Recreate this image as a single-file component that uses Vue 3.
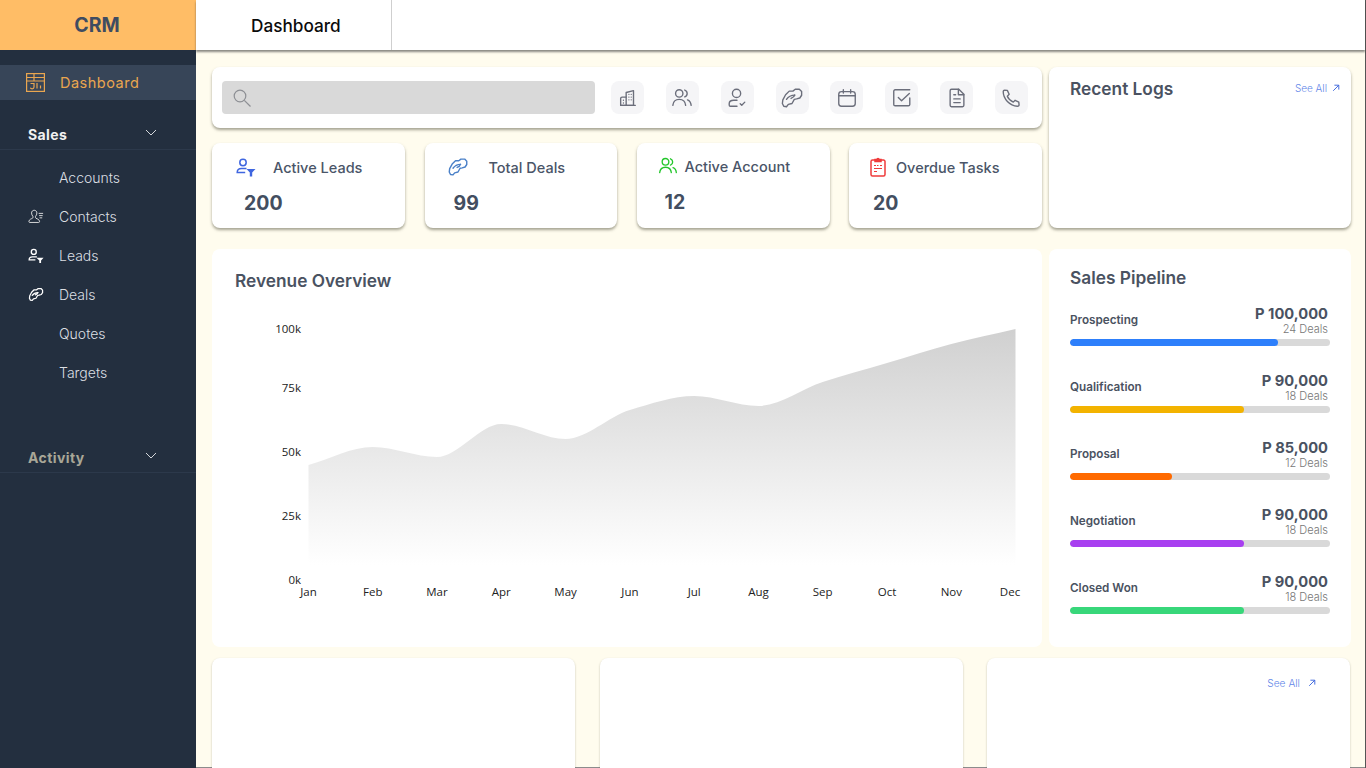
<script setup>
const navItems = [
  { label: 'Accounts' },
  { label: 'Contacts', icon: 'contacts' },
  { label: 'Leads', icon: 'leads' },
  { label: 'Deals', icon: 'deals' },
  { label: 'Quotes' },
  { label: 'Targets' }
]

const icons = {
  building: ['M10 20V6l8-2v16Z', 'M10 11H5.500a1.500 1.500 0 0 0-1.500 1.500V20h6', 'M13 8h.01M15.500 8h.01M13 11h.01M15.500 11h.01M13 14h.01M15.500 14h.01M7 14.500h.01M7 17.500h.01', 'M4 20H20'],
  people: ['M9 11a4 4 0 1 0 0-8 4 4 0 0 0 0 8Z', 'M2 20c.4-4 3.200-6.500 7-6.500s6.600 2.500 7 6.500', 'M15 3.300a4 4 0 0 1 0 7.500', 'M18 14c2.300.8 3.700 3 4 6'],
  usercheck: ['M11.500 11.500a4.500 4.500 0 1 0 0-9 4.500 4.500 0 0 0 0 9Z', 'M12 14.500H8.500c-2.800 0-5 1.500-5 3.500v1.500c0 .8.500 1.500 1.200 1.500H12', 'M15.500 18.200l1.700 1.600 3.300-3.300'],
  deals: ['M5 8.500L9 4.500H13L15.500 2.500H20L22.500 5V9L20.500 12 17 13 14.500 13.500 12 18 8 19 6 21.500 3 21 1.500 18 2 14Z', 'M6 13.500C8 10.500 11 8.800 15 8.800', 'M15 8.800C14.500 10.500 13.500 11.500 11 12.500'],
  calendar: ['M3 8a3 3 0 0 1 3-3h12a3 3 0 0 1 3 3v10a3 3 0 0 1-3 3H6a3 3 0 0 1-3-3Z', 'M3 9.500h18', 'M8 3v3.500M16 3v3.500'],
  task: ['M20.500 12v7a1.500 1.500 0 0 1-1.500 1.500H4.500A1.500 1.500 0 0 1 3 19V4.500A1.500 1.500 0 0 1 4.500 3H20.500', 'M8 11.500l3.500 3.500 8.500-8'],
  doc: ['M6 2.500h8l5.500 5.500v12a1.500 1.500 0 0 1-1.500 1.500H6A1.500 1.500 0 0 1 4.500 20V4A1.500 1.500 0 0 1 6 2.500Z', 'M13.500 2.500V8.500H19.500', 'M8.500 8.500h2M8.500 13h7M8.500 17h7'],
  phone: ['M5 3.500l3 .2 2 4.300-2 2c1 2.500 3.500 5 6.500 6.500l2-2 4 2 .3 3c.1 1-.8 1.500-1.800 1.500C10.500 20.500 3.500 13 3.500 5c0-1 .5-1.500 1.500-1.500Z']
}

const toolbar = ['building', 'people', 'usercheck', 'deals', 'calendar', 'task', 'doc', 'phone']

const stats = [
  { label: 'Active Leads', value: '200', variant: 'leads' },
  { label: 'Total Deals', value: '99', variant: 'deals' },
  { label: 'Active Account', value: '12', variant: 'account' },
  { label: 'Overdue Tasks', value: '20', variant: 'tasks' }
]

const pipeline = [
  { name: 'Prospecting', amount: 'P 100,000', deals: '24 Deals', pct: 80, color: '#2d7ffb' },
  { name: 'Qualification', amount: 'P 90,000', deals: '18 Deals', pct: 67, color: '#f3b300' },
  { name: 'Proposal', amount: 'P 85,000', deals: '12 Deals', pct: 39.2, color: '#ff6a00' },
  { name: 'Negotiation', amount: 'P 90,000', deals: '18 Deals', pct: 67, color: '#a83ff0' },
  { name: 'Closed Won', amount: 'P 90,000', deals: '18 Deals', pct: 67, color: '#38d77a' }
]

const chartPoints = [
  [308.5, 465], [372.8, 447], [437, 457], [501.3, 424], [565.6, 439], [629.9, 410],
  [694.2, 396], [758.5, 406], [822.7, 382], [887, 363], [951.3, 344], [1015.5, 329]
]
const chartBottom = 565

function monotonePath(pts) {
  const n = pts.length
  const dx = []
  const slope = []
  for (let i = 0; i < n - 1; i++) {
    dx[i] = pts[i + 1][0] - pts[i][0]
    slope[i] = (pts[i + 1][1] - pts[i][1]) / dx[i]
  }
  const t = [slope[0]]
  for (let i = 1; i < n - 1; i++) {
    t[i] = slope[i - 1] * slope[i] <= 0 ? 0 : (2 * slope[i - 1] * slope[i]) / (slope[i - 1] + slope[i])
  }
  t[n - 1] = slope[n - 2]
  let d = `M${pts[0][0]} ${pts[0][1]}`
  for (let i = 0; i < n - 1; i++) {
    const h = dx[i] / 3
    d += `C${pts[i][0] + h} ${pts[i][1] + t[i] * h} ${pts[i + 1][0] - h} ${pts[i + 1][1] - t[i + 1] * h} ${pts[i + 1][0]} ${pts[i + 1][1]}`
  }
  return d
}

const areaPath = `${monotonePath(chartPoints)}L1015.5 ${chartBottom}L308.5 ${chartBottom}Z`

const yLabels = [
  { t: '100k', y: 328 }, { t: '75k', y: 387 }, { t: '50k', y: 451 }, { t: '25k', y: 515 }, { t: '0k', y: 579 }
]
const xLabels = [
  { t: 'Jan', x: 308.5 }, { t: 'Feb', x: 372.8 }, { t: 'Mar', x: 437 }, { t: 'Apr', x: 501.3 }, { t: 'May', x: 565.6 }, { t: 'Jun', x: 629.9 },
  { t: 'Jul', x: 694.2 }, { t: 'Aug', x: 758.5 }, { t: 'Sep', x: 822.7 }, { t: 'Oct', x: 887 }, { t: 'Nov', x: 951.3 }, { t: 'Dec', x: 1010 }
]
</script>

<template>
  <div class="app">
    <aside class="sidebar">
      <div class="brand">CRM</div>
      <nav class="nav">
        <a class="active-item">
          <svg class="dash-icon" viewBox="0 0 19 19" fill="none" stroke="#e9a650" stroke-width="1.200">
            <rect x="0.600" y="0.600" width="17.800" height="17.800" />
            <path d="M0.600 4.500H18.400M0.600 8H18.400M8 0.600V8" />
            <path d="M4.500 10.500H8V14c0 1.200-.9 1.800-1.900 1.800-.9 0-1.500-.4-1.800-1" />
            <path d="M11 10V15.500M14.500 12.500V15.500" />
          </svg>
          <span>Dashboard</span>
        </a>

        <div class="section-head sales-head">
          <span>Sales</span>
          <svg class="chev" viewBox="0 0 12 7" fill="none" stroke="#d5d8dc" stroke-width="1"><path d="M1 1l5 5 5-5" /></svg>
        </div>

        <ul class="nav-list">
          <li v-for="item in navItems" :key="item.label" class="nav-item">
            <span class="nav-icon">
              <svg v-if="item.icon === 'contacts'" viewBox="0 0 18 16" fill="none" stroke="#e8e8e8" stroke-width="1"><path d="M7 1c-1.700 0-3 1.300-3 3 0 1.500.6 3 1.500 3.800.3.400.2 1.700-.5 2.200-1.500.8-3.500 1-4 3.500-.1.700.3 1.200 1 1.200h10c.7 0 1.100-.5 1-1.200-.5-2.500-2.500-2.700-4-3.500-.7-.5-.8-1.800-.5-2.200C9.400 7 10 5.500 10 4c0-1.700-1.300-3-3-3Z" /><path d="M12 4.500h5M12.500 7h4M13 9.500h3" /></svg>
              <svg v-else-if="item.icon === 'leads'" viewBox="0 0 18 16" fill="none" stroke="#fff" stroke-width="1.500"><circle cx="6.500" cy="4" r="2.800" /><path d="M10 9.500H5c-2.200 0-3.700 1.200-3.700 3.500h7" /><path d="M9.500 10.500h8L14.700 13.500V16.500H12.700V13.500Z" fill="#fff" stroke="none" /></svg>
              <svg v-else-if="item.icon === 'deals'" viewBox="0 0 24 24" fill="none" stroke="#fff" stroke-width="2" stroke-linejoin="round" stroke-linecap="round"><path v-for="d in icons.deals" :key="d" :d="d" /></svg>
            </span>
            <span>{{ item.label }}</span>
          </li>
        </ul>

        <div class="section-head activity-head">
          <span>Activity</span>
          <svg class="chev" viewBox="0 0 12 7" fill="none" stroke="#d5d8dc" stroke-width="1"><path d="M1 1l5 5 5-5" /></svg>
        </div>
      </nav>
    </aside>

    <main class="main">
      <header class="topbar">
        <div class="tab">Dashboard</div>
      </header>

      <div class="content">
        <div class="top-grid">
          <div class="left-top">
            <section class="toolbar card raised">
              <div class="search">
                <svg viewBox="0 0 18 18" fill="none" stroke="#8d8f94" stroke-width="1.200"><circle cx="7" cy="7" r="5.800" /><path d="M11.300 11.300L17.500 17.500" /></svg>
              </div>
              <div class="tool-icons">
                <button v-for="name in toolbar" :key="name" class="tool-btn" type="button">
                  <svg viewBox="0 0 24 24" fill="none" stroke="#6b6e7b" stroke-width="1.500" stroke-linecap="round" stroke-linejoin="round">
                    <path v-for="d in icons[name]" :key="d" :d="d" />
                  </svg>
                </button>
              </div>
            </section>

            <div class="stats">
              <section v-for="s in stats" :key="s.label" class="stat card raised" :class="`stat-${s.variant}`">
                <div class="stat-head">
                  <svg v-if="s.variant === 'leads'" class="stat-icon" viewBox="0 0 20 18" fill="none" stroke="#3f66e0" stroke-width="1.500"><circle cx="7" cy="4.500" r="3.200" /><path d="M10.500 10.500H5.500C3 10.500 1.200 12 1.200 14.500h8" /><path d="M10.500 11h9l-3.300 3.500V18.500h-2.400V14.500Z" fill="#3f66e0" stroke="none" /></svg>
                  <svg v-else-if="s.variant === 'deals'" class="stat-icon" viewBox="0 0 24 24" fill="none" stroke="#4a80c8" stroke-width="1.700" stroke-linejoin="round" stroke-linecap="round"><path v-for="d in icons.deals" :key="d" :d="d" /></svg>
                  <svg v-else-if="s.variant === 'account'" class="stat-icon" viewBox="0 0 24 24" fill="none" stroke="#22c62a" stroke-width="1.600" stroke-linecap="round"><path v-for="d in icons.people" :key="d" :d="d" /></svg>
                  <svg v-else class="stat-icon" viewBox="0 0 16 20" fill="none" stroke="#ef3b3b" stroke-width="1.500"><path d="M5 3H2.500C1.700 3 1 3.700 1 4.500v13c0 .8.700 1.500 1.500 1.500h11c.8 0 1.500-.7 1.500-1.500v-13C15 3.700 14.300 3 13.500 3H11" /><path d="M5 4.500V2.500h2C7 1 9 1 9 2.500h2v2Z" fill="#ef3b3b" /><path d="M4 8.500h2M7 8.500h1.500M10 8.500h2M4 11.500h8M4 14.500h3" stroke-width="1" /></svg>
                  <span class="stat-label">{{ s.label }}</span>
                </div>
                <div class="stat-value">{{ s.value }}</div>
              </section>
            </div>
          </div>

          <section class="logs card raised">
            <h2 class="title logs-title">Recent Logs</h2>
            <a class="see-all">
              <span>See All</span>
              <svg viewBox="0 0 10 10" fill="none" stroke="#3f67dd" stroke-width="1.200"><path d="M1.500 8.500L8.500 1.500M3 1.500H8.500V7" /></svg>
            </a>
          </section>

          <section class="revenue card">
            <h2 class="title revenue-title">Revenue Overview</h2>
            <svg class="chart" viewBox="212 310 830 300">
              <defs>
                <linearGradient id="areaFill" x1="0" y1="0" x2="0" y2="1">
                  <stop offset="0" stop-color="#d0d0d0" />
                  <stop offset="1" stop-color="#ffffff" />
                </linearGradient>
              </defs>
              <path :d="areaPath" fill="url(#areaFill)" />
              <text v-for="l in yLabels" :key="l.t" x="301" :y="l.y" text-anchor="end" dominant-baseline="central" class="axis">{{ l.t }}</text>
              <text v-for="l in xLabels" :key="l.t" :x="l.x" y="591" text-anchor="middle" dominant-baseline="central" class="axis">{{ l.t }}</text>
            </svg>
          </section>

          <section class="pipeline card">
            <h2 class="title pipeline-title">Sales Pipeline</h2>
            <div v-for="p in pipeline" :key="p.name" class="pipe-row">
              <div class="pipe-top">
                <span class="pipe-name">{{ p.name }}</span>
                <div class="pipe-nums">
                  <div class="pipe-amount">{{ p.amount }}</div>
                  <div class="pipe-deals">{{ p.deals }}</div>
                </div>
              </div>
              <div class="bar"><div class="bar-fill" :style="{ width: p.pct + '%', background: p.color }"></div></div>
            </div>
          </section>
        </div>

        <div class="bottom-grid">
          <section class="bottom-card card"></section>
          <section class="bottom-card card"></section>
          <section class="bottom-card card last">
            <a class="see-all bottom-see">
              <span>See All</span>
              <svg viewBox="0 0 10 10" fill="none" stroke="#3f67dd" stroke-width="1.200"><path d="M1.500 8.500L8.500 1.500M3 1.500H8.500V7" /></svg>
            </a>
          </section>
        </div>
      </div>
    </main>
  </div>
</template>

<style>
html, body { margin: 0; padding: 0; background: #fffcee; }
</style>

<style scoped>
* { box-sizing: border-box; }
.app {
  display: flex;
  width: 1366px;
  height: 768px;
  overflow: hidden;
  font-family: Inter, "Liberation Sans", sans-serif;
}
.sidebar {
  width: 196px;
  flex: none;
  background: #232f3f;
  display: flex;
  flex-direction: column;
}
.brand {
  height: 50px;
  background: #ffbd66;
  display: flex;
  align-items: center;
  justify-content: center;
  padding-right: 2px;
  font-size: 19.500px;
  font-weight: 700;
  color: #3f4c61;
}
.nav { padding-top: 15px; }
.active-item {
  height: 35px;
  background: #374558;
  display: flex;
  align-items: center;
  padding-left: 26px;
  gap: 15px;
  color: #eaa64f;
  font-size: 14.500px;
  font-weight: 400;
  letter-spacing: 0.500px;
}
.dash-icon { width: 19px; height: 19px; }
.section-head {
  display: flex;
  align-items: flex-start;
  justify-content: space-between;
  height: 25px;
  padding: 0 39px 0 28px;
  border-bottom: 1px solid #2c394b;
  font-size: 14px;
  font-weight: 700;
  letter-spacing: 0.400px;
  color: #f1f1f1;
}
.section-head span { line-height: 20px; }
.sales-head { margin-top: 25px; }
.activity-head { margin-top: 56px; color: #a9a797; }
.chev { width: 12px; height: 7px; margin-top: 4px; }
.nav-list { list-style: none; margin: 8px 0 0; padding: 0; }
.nav-item {
  height: 39px;
  display: flex;
  align-items: center;
  padding-left: 28px;
  color: #dcdfe3;
  font-size: 14px;
  font-weight: 300;
}
.nav-icon { width: 31px; flex: none; display: flex; align-items: center; height: 16px; }
.nav-icon svg { width: 16px; height: 15px; }
.main {
  flex: 1;
  min-width: 0;
  background: #fffcee;
  border-right: 1px solid #555;
  box-shadow: inset 0 -1px 0 #8c8c8c;
  display: flex;
  flex-direction: column;
}
.topbar {
  height: 50px;
  flex: none;
  background: #fff;
  box-shadow: 0 2px 2px rgba(60, 60, 60, 0.6);
  position: relative;
  display: flex;
}
.tab {
  width: 196px;
  border-right: 1px solid #cfcfcf;
  padding: 1px 0 0 55px;
  display: flex;
  align-items: center;
  font-size: 17.200px;
  font-weight: 500;
  color: #0b0b0b;
}
.content { padding: 17px 14px 0 16px; }
.top-grid {
  display: grid;
  grid-template-columns: 830px 302px;
  grid-template-rows: 161px 398px;
  column-gap: 7px;
  row-gap: 21px;
}
.card { background: #fff; border-radius: 8px; }
.raised { box-shadow: 0 2px 3px rgba(90, 90, 70, 0.55); }
.left-top { display: flex; flex-direction: column; gap: 15px; }
.toolbar {
  height: 61px;
  flex: none;
  display: flex;
  align-items: center;
  padding: 0 14px 0 10px;
}
.search {
  width: 373px;
  height: 33px;
  background: #d9d9d9;
  border-radius: 4px;
  display: flex;
  align-items: center;
  padding-left: 11px;
}
.search svg { width: 18px; height: 18px; }
.tool-icons {
  flex: 1;
  margin-left: 16px;
  display: flex;
  justify-content: space-between;
}
.tool-btn {
  width: 33px;
  height: 33px;
  padding: 0;
  border: 0;
  border-radius: 8px;
  background: #f5f5f7;
  display: flex;
  align-items: center;
  justify-content: center;
}
.tool-btn svg { width: 22px; height: 22px; }
.stats {
  display: grid;
  grid-template-columns: 193px 192.500px 193px 193px;
  justify-content: space-between;
  height: 85px;
}
.stat { padding-top: 12px; }
.stat-head { display: flex; align-items: center; height: 24px; }
.stat-icon { width: 20px; height: 20px; flex: none; }
.stat-label { font-size: 14.500px; font-weight: 500; color: #4a5568; }
.stat-value { font-size: 19.500px; font-weight: 700; color: #434e60; line-height: 24px; margin-top: 12px; }
.stat-leads .stat-head { padding-left: 24px; gap: 17px; }
.stat-leads .stat-value { padding-left: 32px; }
.stat-deals .stat-head { padding-left: 23px; gap: 21px; }
.stat-deals .stat-value { padding-left: 29px; }
.stat-account .stat-head { padding-left: 21px; gap: 7px; margin-top: -1px; margin-bottom: 1px; }
.stat-account .stat-value { padding-left: 28px; }
.stat-tasks .stat-head { padding-left: 19px; gap: 8px; }
.stat-tasks .stat-value { padding-left: 24px; }
.title { margin: 0; font-size: 17.300px; font-weight: 600; color: #4a5261; line-height: 22px; }
.logs { position: relative; padding: 11px 21px; }
.see-all {
  display: flex;
  align-items: center;
  gap: 5px;
  font-size: 10px;
  font-weight: 300;
  color: #5f86e8;
  position: absolute;
  top: 15px;
  right: 11px;
}
.see-all svg { width: 8px; height: 8px; }
.revenue { padding-top: 21px; }
.revenue-title { padding-left: 23px; }
.chart { display: block; width: 830px; height: 300px; margin-top: 18px; }
.axis { font-family: "Open Sans", "Noto Sans", sans-serif; font-size: 11.500px; fill: #222; }
.pipeline { padding: 18px 21px; }
.pipeline-title { margin-bottom: 16px; }
.pipe-row { height: 67px; }
.pipe-top { display: flex; justify-content: space-between; align-items: flex-start; padding-right: 2px; height: 32px; }
.pipe-name { font-size: 11.700px; font-weight: 600; color: #4a5261; line-height: 31px; }
.pipe-nums { padding-top: 1px; }
.pipe-amount { font-size: 14.700px; font-weight: 700; color: #4a5261; text-align: right; line-height: 16px; }
.pipe-deals { font-size: 11px; font-weight: 300; color: #777; text-align: right; line-height: 14px; }
.bar { height: 7px; margin-top: 2px; border-radius: 4px; background: #d9d9d9; overflow: hidden; }
.bar-fill { height: 100%; border-radius: 4px; }
.bottom-grid {
  margin-top: 11px;
  display: grid;
  grid-template-columns: repeat(3, 363px);
  column-gap: 24.500px;
}
.bottom-card {
  height: 140px;
  position: relative;
  box-shadow: 0 1px 2px rgba(90, 90, 70, 0.4);
}
.bottom-see { top: 19px; right: 34px; gap: 8px; font-size: 10.200px; }
</style>
